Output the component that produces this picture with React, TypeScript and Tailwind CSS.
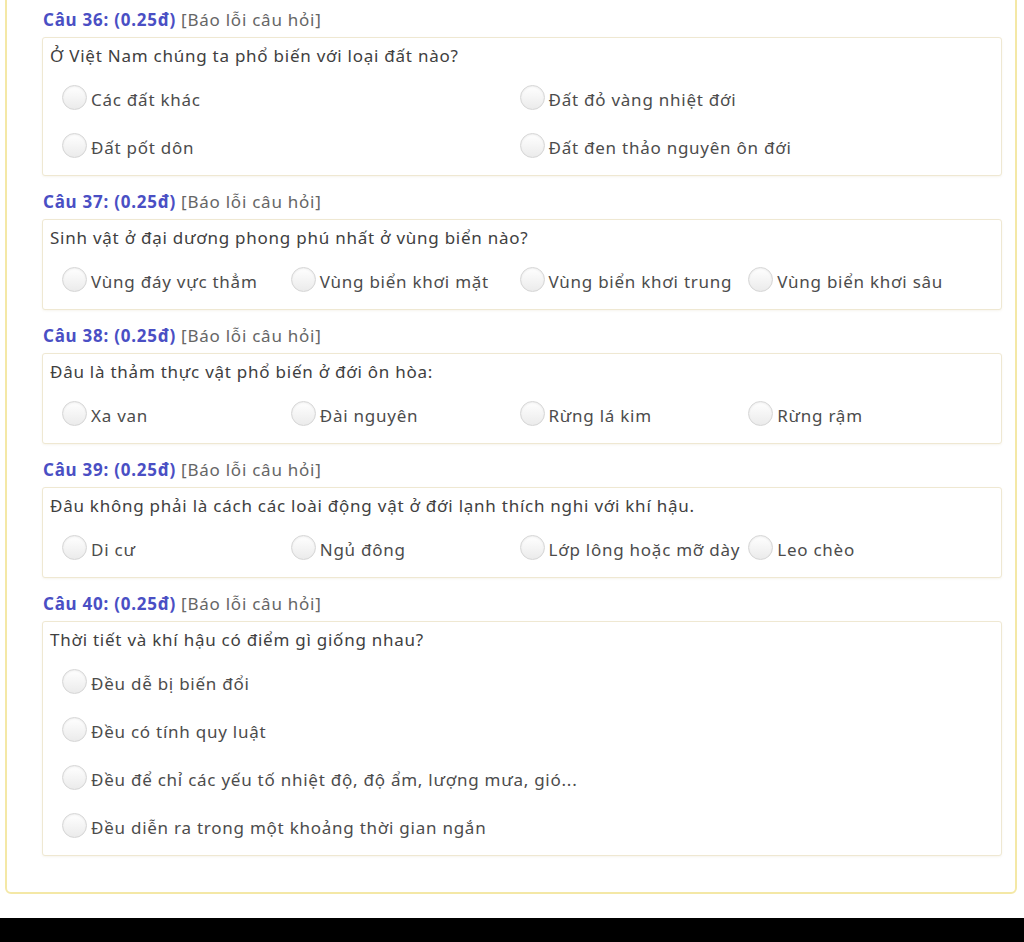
import React from 'react';

type Question = {
  no: number;
  text: string;
  options: string[];
  cols: 1 | 2 | 4;
};

const questions: Question[] = [
  {
    no: 36,
    text: 'Ở Việt Nam chúng ta phổ biến với loại đất nào?',
    options: ['Các đất khác', 'Đất đỏ vàng nhiệt đới', 'Đất pốt dôn', 'Đất đen thảo nguyên ôn đới'],
    cols: 2,
  },
  {
    no: 37,
    text: 'Sinh vật ở đại dương phong phú nhất ở vùng biển nào?',
    options: ['Vùng đáy vực thẳm', 'Vùng biển khơi mặt', 'Vùng biển khơi trung', 'Vùng biển khơi sâu'],
    cols: 4,
  },
  {
    no: 38,
    text: 'Đâu là thảm thực vật phổ biến ở đới ôn hòa:',
    options: ['Xa van', 'Đài nguyên', 'Rừng lá kim', 'Rừng rậm'],
    cols: 4,
  },
  {
    no: 39,
    text: 'Đâu không phải là cách các loài động vật ở đới lạnh thích nghi với khí hậu.',
    options: ['Di cư', 'Ngủ đông', 'Lớp lông hoặc mỡ dày', 'Leo chèo'],
    cols: 4,
  },
  {
    no: 40,
    text: 'Thời tiết và khí hậu có điểm gì giống nhau?',
    options: [
      'Đều dễ bị biến đổi',
      'Đều có tính quy luật',
      'Đều để chỉ các yếu tố nhiệt độ, độ ẩm, lượng mưa, gió...',
      'Đều diễn ra trong một khoảng thời gian ngắn',
    ],
    cols: 1,
  },
];

const gridCols = {
  1: 'grid-cols-1',
  2: 'grid-cols-2',
  4: 'grid-cols-4',
};

function Radio() {
  return (
    <span className="shrink-0 -mt-[5px] w-[25px] h-[25px] rounded-full border border-[#d6d6d6] bg-gradient-to-b from-[#ffffff] to-[#ebebeb] shadow-[inset_0_1px_2px_rgba(0,0,0,0.07)]" />
  );
}

function QuestionBlock({ q }: { q: Question }) {
  return (
    <div className="mb-[14px]">
      <div className="h-[24px] leading-[24px] pl-px">
        <span className="font-bold text-[#4a4fc4]">Câu {q.no}: (0.25đ)</span>{' '}
        <span className="text-[#666]">[Báo lỗi câu hỏi]</span>
      </div>
      <div className="mt-[5px] border border-[#efe8d2] rounded-[3px] bg-white shadow-[0_1px_2px_rgba(200,190,150,0.15)] pl-[7px] pr-[24px] pt-[6px] pb-[3px]">
        <div className="h-[24px] leading-[24px] text-[#404040]">{q.text}</div>
        <div className={`mt-[8px] pl-[12px] grid ${gridCols[q.cols]}`}>
          {q.options.map((o) => (
            <label key={o} className="h-[48px] flex items-center gap-[4px] text-[#4c4c4c] whitespace-nowrap">
              <Radio />
              <span>{o}</span>
            </label>
          ))}
        </div>
      </div>
    </div>
  );
}

export default function App() {
  return (
    <div
      className="h-[942px] flex flex-col bg-white text-[17px] tracking-[0.75px] overflow-hidden"
      style={{ fontFamily: '"Noto Sans", sans-serif' }}
    >
      <div className="flex-1 pl-[5px] pr-[7px]">
        <div className="-mt-[20px] border-2 border-[#f4e8a6] rounded-[6px] pl-[35px] pr-[13px] pt-[26px] pb-[22px]">
          {questions.map((q) => (
            <QuestionBlock key={q.no} q={q} />
          ))}
        </div>
      </div>
      <div className="h-[24px] bg-black" />
    </div>
  );
}
